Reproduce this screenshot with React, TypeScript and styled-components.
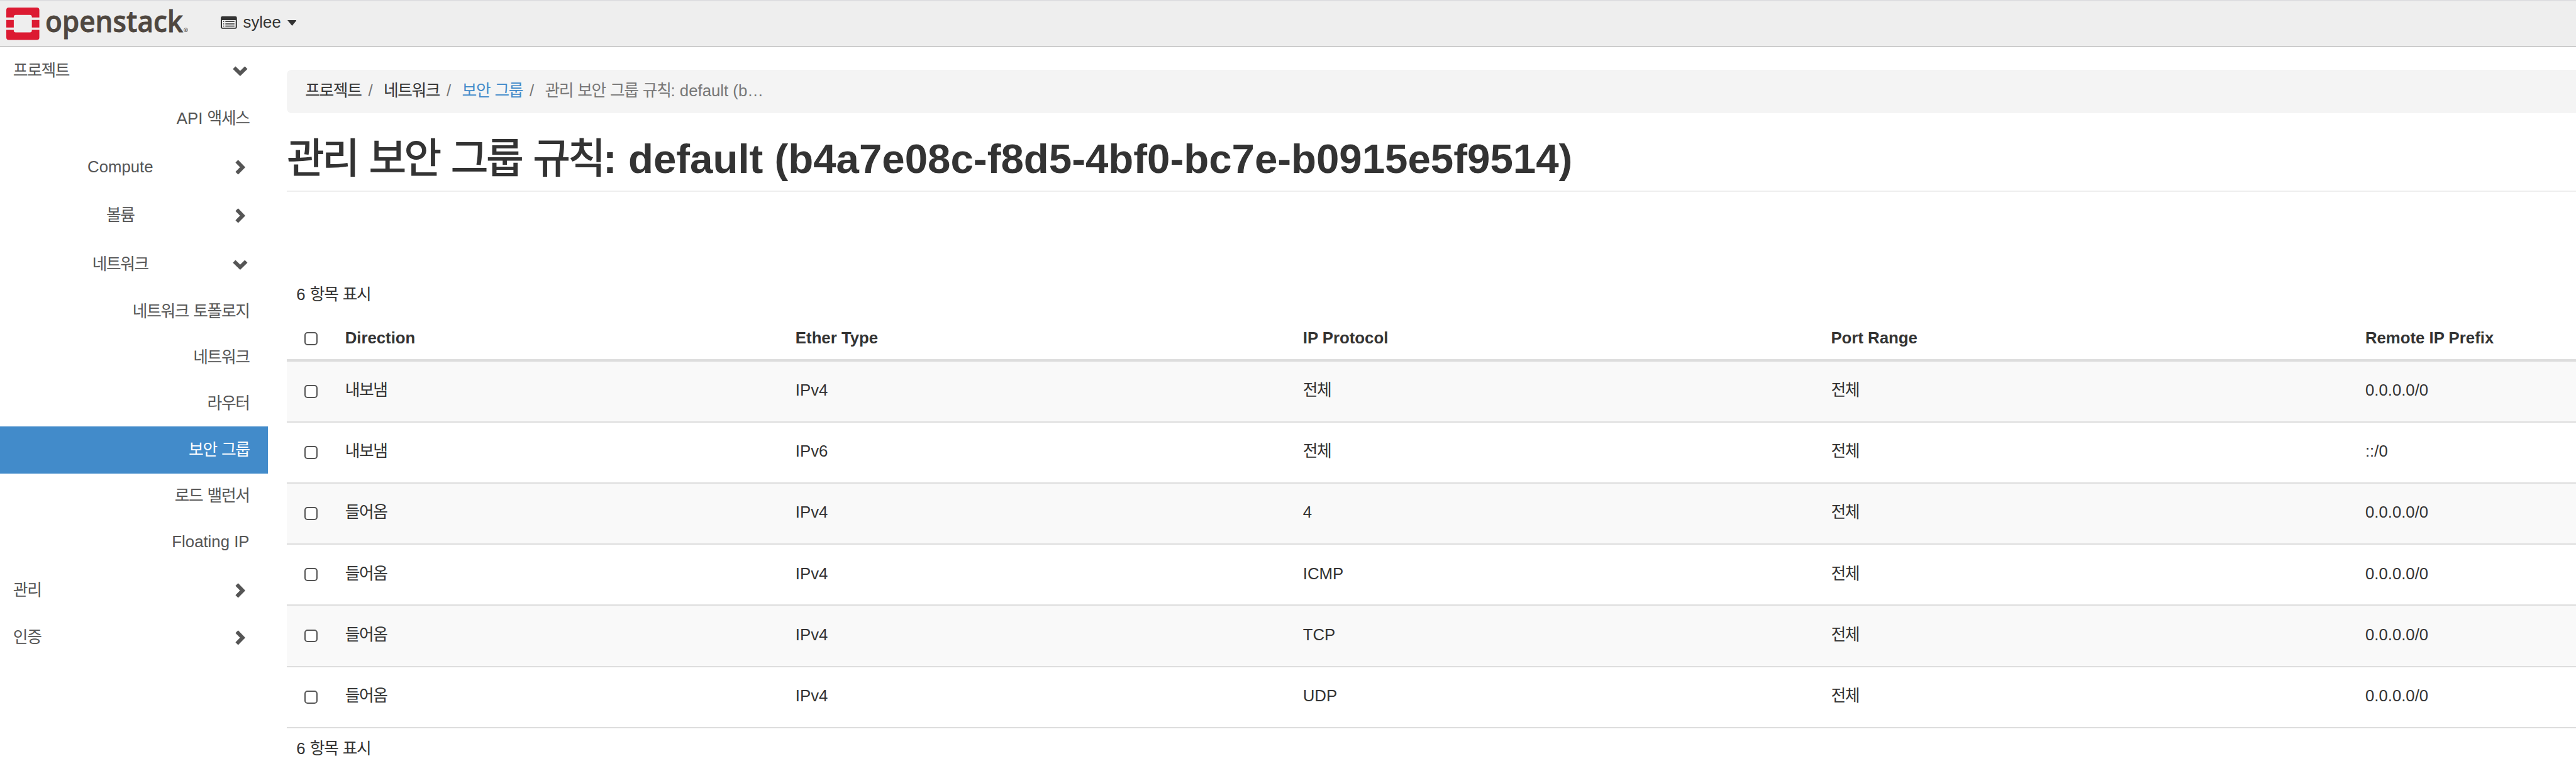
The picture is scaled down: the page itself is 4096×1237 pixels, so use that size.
import React from 'react';
import styled, { createGlobalStyle, css } from 'styled-components';

const SCALE = 4096 / 4132;
const u = (n: number) => `${(n * SCALE).toFixed(3)}px`;

const GlobalStyle = createGlobalStyle`
  * { box-sizing: border-box; }
  html, body { margin: 0; padding: 0; background: #fff; }
  body {
    width: 4096px;
    height: 1237px;
    overflow: hidden;
    font-family: "Liberation Sans", "Noto Sans CJK KR", sans-serif;
    font-size: ${u(26)};
    line-height: ${u(38)};
    color: #333;
  }
`;

const Hangul = styled.span`
  letter-spacing: -0.054em;
`;

/* Sets Hangul runs slightly tighter than the Latin around them. */
const Label = ({ text }: { text: string }) => (
  <>
    {text.split(/([\uAC00-\uD7A3]+)/).map((part, i) =>
      i % 2 ? <Hangul key={i}>{part}</Hangul> : part
    )}
  </>
);

const Page = styled.div`
  display: flex;
  flex-direction: column;
  width: 4096px;
  height: 1237px;
  background: #fff;
`;

const Navbar = styled.header`
  display: flex;
  align-items: center;
  flex: none;
  height: ${u(76)};
  padding-left: ${u(10)};
  background: #eee;
  border-top: 2px solid #dddde0;
  border-bottom: 2px solid #ccc;
`;

const Logo = styled.svg`
  display: block;
  width: ${u(300)};
  height: ${u(72)};
  overflow: visible;
`;

const ProjectMenu = styled.div`
  display: flex;
  align-items: center;
  margin-left: ${u(44)};
  height: ${u(72)};
  padding-bottom: ${u(3)};
  color: #333;
  white-space: nowrap;
`;

const ListIcon = styled.svg`
  width: ${u(26)};
  height: ${u(20)};
  margin-right: ${u(10)};
  margin-top: ${u(-1)};
`;

const Caret = styled.svg`
  width: ${u(15)};
  height: ${u(9)};
  margin-left: ${u(10)};
  margin-top: ${u(1)};
`;

const Body = styled.div`
  display: flex;
  flex: 1;
  min-height: 0;
`;

const Sidebar = styled.nav`
  display: flex;
  flex-direction: column;
  flex: none;
  width: ${u(430)};
  color: #555;
`;

type Level = 'panel' | 'group' | 'leaf';

const NavRow = styled.div<{ $level: Level; $h: number; $active?: boolean }>`
  display: flex;
  align-items: center;
  flex: none;
  height: ${(p) => u(p.$h)};
  white-space: nowrap;
  padding: 0 ${u(30)} 0 ${u(21)};
  ${(p) =>
    p.$level === 'panel' &&
    css`
      justify-content: space-between;
      padding-right: ${u(31.3)};
    `}
  ${(p) =>
    p.$level === 'group' &&
    css`
      justify-content: space-between;
      padding-left: 0;
      padding-right: ${u(31.3)};
    `}
  ${(p) =>
    p.$level === 'leaf' &&
    css`
      justify-content: flex-end;
    `}
  ${(p) =>
    p.$active &&
    css`
      margin: ${u(-1)} 0;
      background: #428bca;
      color: #fff;
    `}
`;

const GroupName = styled.span`
  width: ${u(386)};
  margin-right: ${u(-14)};
  text-align: center;
`;

const Chevron = styled.svg<{ $open?: boolean }>`
  flex: none;
  width: ${u(26)};
  height: ${u(26)};
  transform: ${(p) => (p.$open ? 'rotate(90deg)' : 'none')};
`;

const Content = styled.main`
  flex: 1;
  min-width: 0;
  padding: ${u(36)} 0 0 ${u(30)};
`;

const Breadcrumb = styled.div`
  display: flex;
  align-items: center;
  height: ${u(70)};
  padding: 0 0 ${u(1)} ${u(29.5)};
  background: #f4f4f4;
  border-radius: ${u(8)} 0 0 ${u(8)};
  white-space: nowrap;
`;

const Crumb = styled.span<{ $tone: string }>`
  color: ${(p) => p.$tone};
`;

const Slash = styled.span`
  margin: 0 ${u(17.5)} 0 ${u(11)};
  color: #777;
`;

const Title = styled.h1`
  height: ${u(126)};
  margin: 0;
  padding-top: ${u(34)};
  border-bottom: 2px solid #eee;
  font-size: ${u(66)};
  line-height: ${u(78)};
  font-weight: 700;
  white-space: nowrap;

  ${Hangul} {
    font-weight: 500;
    letter-spacing: -0.063em;
  }
`;

const Count = styled.div<{ $top: number }>`
  padding: ${(p) => u(p.$top)} 0 ${u(16)} ${u(15.5)};
`;

const Row = styled.div<{ $head?: boolean; $odd?: boolean }>`
  display: grid;
  grid-template-columns: ${u(93.5)} ${u(722.5)} ${u(814)} ${u(847)} ${u(857)} 1fr;
  align-items: center;
  height: ${(p) => u(p.$head ? 72 : 98)};
  padding-top: ${(p) => u(p.$head ? 2 : 0)};
  border-bottom: ${(p) => (p.$head ? 4 : 2)}px solid #ddd;
  background: ${(p) => (p.$odd ? '#f9f9f9' : '#fff')};
  font-weight: ${(p) => (p.$head ? 700 : 400)};
  white-space: nowrap;
`;

const Cell = styled.span`
  padding-bottom: ${u(3)};
`;

const Checkbox = styled.span`
  display: block;
  width: ${u(21)};
  height: ${u(21)};
  margin-left: ${u(28.5)};
  border: 2px solid #555;
  border-radius: ${u(5)};
  background: #fff;
`;

const navItems: { text: string; level: Level; h: number; open?: boolean; active?: boolean }[] = [
  { text: '프로젝트', level: 'panel', h: 76, open: true },
  { text: 'API 액세스', level: 'leaf', h: 77.5 },
  { text: 'Compute', level: 'group', h: 77 },
  { text: '볼륨', level: 'group', h: 79 },
  { text: '네트워크', level: 'group', h: 77.5, open: true },
  { text: '네트워크 토폴로지', level: 'leaf', h: 74 },
  { text: '네트워크', level: 'leaf', h: 74 },
  { text: '라우터', level: 'leaf', h: 74 },
  { text: '보안 그룹', level: 'leaf', h: 76, active: true },
  { text: '로드 밸런서', level: 'leaf', h: 74 },
  { text: 'Floating IP', level: 'leaf', h: 74 },
  { text: '관리', level: 'panel', h: 80 },
  { text: '인증', level: 'panel', h: 72 },
];

const columns = ['Direction', 'Ether Type', 'IP Protocol', 'Port Range', 'Remote IP Prefix'];

const rules = [
  ['내보냄', 'IPv4', '전체', '전체', '0.0.0.0/0'],
  ['내보냄', 'IPv6', '전체', '전체', '::/0'],
  ['들어옴', 'IPv4', '4', '전체', '0.0.0.0/0'],
  ['들어옴', 'IPv4', 'ICMP', '전체', '0.0.0.0/0'],
  ['들어옴', 'IPv4', 'TCP', '전체', '0.0.0.0/0'],
  ['들어옴', 'IPv4', 'UDP', '전체', '0.0.0.0/0'],
];

const crumbs = [
  { text: '프로젝트', tone: '#333' },
  { text: '네트워크', tone: '#333' },
  { text: '보안 그룹', tone: '#428bca' },
  { text: '관리 보안 그룹 규칙: default (b…', tone: '#777' },
];

const Arrow = ({ open }: { open?: boolean }) => (
  <Chevron viewBox="0 0 26 26" $open={open}>
    <path d="M7.6 3.4 17 13 7.6 22.6" fill="none" stroke="#555" strokeWidth="6" />
  </Chevron>
);

export default function App() {
  return (
    <Page>
      <GlobalStyle />
      <Navbar>
        <Logo viewBox="10 2 300 72">
          <g fill="#dc1a32">
            <path d="M14 12H59a4 4 0 0 1 4 4V28H51V27a3 3 0 0 0-3-3H25a3 3 0 0 0-3 3v1H10V16a4 4 0 0 1 4-4Z" />
            <path d="M10 32H22V44H10ZM51 32H63V44H51Z" />
            <path d="M10 48H22v1a3 3 0 0 0 3 3H48a3 3 0 0 0 3-3v-1H63V60a4 4 0 0 1-4 4H14a4 4 0 0 1-4-4Z" />
          </g>
          <text
            x="72.5"
            y="51.7"
            fontFamily="'Open Sans', sans-serif"
            fontWeight="600"
            fontSize="48.2"
            fill="#4f4740"
            stroke="#4f4740"
            strokeWidth="0.8"
            textLength="221"
            lengthAdjust="spacingAndGlyphs"
          >
            openstack
          </text>
          <circle cx="298" cy="48" r="3" fill="none" stroke="#6b645e" strokeWidth="1" />
          <text x="296.4" y="50" fontFamily="'Open Sans', sans-serif" fontWeight="700" fontSize="5" fill="#6b645e">
            R
          </text>
        </Logo>
        <ProjectMenu>
          <ListIcon viewBox="0 0 26 20">
            <path
              fillRule="evenodd"
              fill="#333"
              d="M2.5 0H23.5A2.5 2.5 0 0 1 26 2.5V17.5A2.5 2.5 0 0 1 23.5 20H2.5A2.5 2.5 0 0 1 0 17.5V2.5A2.5 2.5 0 0 1 2.5 0ZM2 6V17.3a.8.8 0 0 0 .8.8H23.2a.8.8 0 0 0 .8-.8V6Z"
            />
            <path
              d="M4 8.4h1.4M4 12h1.4M4 15.6h1.4M7.4 8.4H22M7.4 12H22M7.4 15.6H22"
              stroke="#333"
              strokeWidth="1.5"
            />
          </ListIcon>
          sylee
          <Caret viewBox="0 0 15 9">
            <path d="M0 0H15L7.5 9Z" fill="#333" />
          </Caret>
        </ProjectMenu>
      </Navbar>
      <Body>
        <Sidebar>
          {navItems.map((item, i) => (
            <NavRow key={i} $level={item.level} $h={item.h} $active={item.active}>
              {item.level === 'group' ? (
                <GroupName>
                  <Label text={item.text} />
                </GroupName>
              ) : (
                <span>
                  <Label text={item.text} />
                </span>
              )}
              {item.level !== 'leaf' && <Arrow open={item.open} />}
            </NavRow>
          ))}
        </Sidebar>
        <Content>
          <Breadcrumb>
            {crumbs.map((c, i) => (
              <React.Fragment key={i}>
                {i > 0 && <Slash>/</Slash>}
                <Crumb $tone={c.tone}>
                  <Label text={c.text} />
                </Crumb>
              </React.Fragment>
            ))}
          </Breadcrumb>
          <Title>
            <Label text="관리 보안 그룹 규칙: default (b4a7e08c-f8d5-4bf0-bc7e-b0915e5f9514)" />
          </Title>
          <Count $top={146}>
            <Label text="6 항목 표시" />
          </Count>
          <div>
            <Row $head>
              <Checkbox />
              {columns.map((c) => (
                <span key={c}>{c}</span>
              ))}
            </Row>
            {rules.map((r, i) => (
              <Row key={i} $odd={i % 2 === 0}>
                <Checkbox />
                {r.map((cell, j) => (
                  <Cell key={j}>
                    <Label text={cell} />
                  </Cell>
                ))}
              </Row>
            ))}
          </div>
          <Count $top={14}>
            <Label text="6 항목 표시" />
          </Count>
        </Content>
      </Body>
    </Page>
  );
}
